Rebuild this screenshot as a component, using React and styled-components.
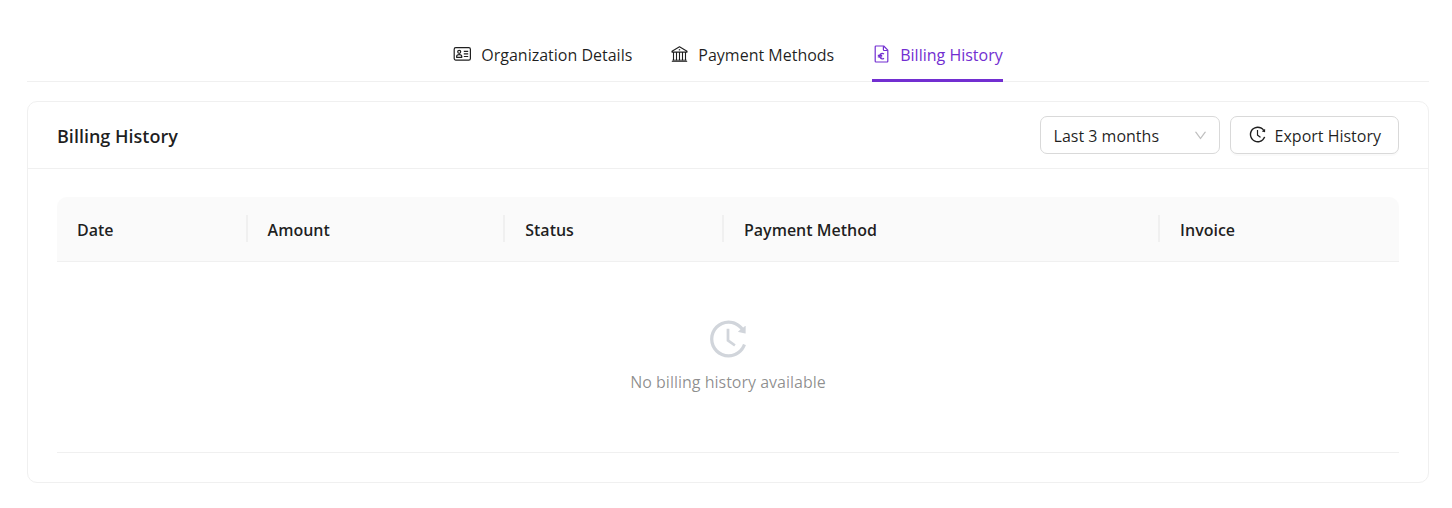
import React, { useState } from "react";
import styled, { createGlobalStyle } from "styled-components";
import { AiOutlineHistory, AiOutlineDown } from "react-icons/ai";

const GlobalStyle = createGlobalStyle`
  *, *::before, *::after { box-sizing: border-box; }
  body {
    margin: 0;
    background: #fff;
    color: rgba(0, 0, 0, 0.88);
    font-family: "Open Sans", "Noto Sans", sans-serif;
    font-size: 16px;
    line-height: 27px;
  }
  button, select { font: inherit; color: inherit; }
`;

const Page = styled.main`
  padding: 27px 23px 25px 27px;
`;

const TabList = styled.div`
  display: flex;
  justify-content: center;
  gap: 38px;
  margin-bottom: 19px;
  box-shadow: inset 0 -1px #f0f0f0;
`;

const Tab = styled.button`
  display: flex;
  align-items: center;
  gap: 10px;
  padding: 15px 0 10px;
  border: 0;
  border-bottom: 3px solid ${(p) => (p.$active ? "#722ed1" : "transparent")};
  background: none;
  color: ${(p) => (p.$active ? "#722ed1" : "inherit")};
  cursor: pointer;

  svg { margin-bottom: 3px; }
`;

const Card = styled.section`
  border: 1px solid #f0f0f0;
  border-radius: 10px;
`;

const CardHeader = styled.header`
  display: flex;
  align-items: center;
  justify-content: space-between;
  padding: 14px 29px;
  border-bottom: 1px solid #f0f0f0;
`;

const Title = styled.h2`
  margin: 0;
  padding-top: 2px;
  font-size: 18px;
  font-weight: 600;
`;

const Actions = styled.div`
  display: flex;
  gap: 10px;
`;

const SelectBox = styled.label`
  display: grid;
  align-items: center;
  width: 180px;

  select, svg { grid-area: 1 / 1; }
  svg {
    justify-self: end;
    margin-right: 12px;
    font-size: 15px;
    color: rgba(0, 0, 0, 0.25);
    pointer-events: none;
  }
`;

const Select = styled.select`
  appearance: none;
  width: 100%;
  height: 38px;
  padding: 2px 36px 0 13px;
  border: 1px solid #d9d9d9;
  border-radius: 7px;
  background: #fff;
`;

const Button = styled.button`
  display: flex;
  align-items: center;
  gap: 8px;
  height: 38px;
  padding: 2px 17px 0;
  border: 1px solid #d9d9d9;
  border-radius: 7px;
  background: #fff;
  box-shadow: 0 2px 0 rgba(0, 0, 0, 0.02);
  cursor: pointer;

  svg { font-size: 19px; margin-bottom: 3px; }
`;

const CardBody = styled.div`
  padding: 28px 29px 29px;
`;

const Table = styled.table`
  width: 100%;
  table-layout: fixed;
  border-collapse: separate;
  border-spacing: 0;
`;

const HeadCell = styled.th`
  width: ${(p) => p.$width};
  padding: 0;
  border-bottom: 1px solid #f0f0f0;
  background: #fafafa;
  font-weight: 600;
  text-align: left;

  &:first-child { border-top-left-radius: 10px; }
  &:last-child { border-top-right-radius: 10px; }
`;

const HeadLabel = styled.div`
  margin: 18px 0 19px;
  padding: 4px 20px 0;
  line-height: 23px;
  border-right: ${(p) => (p.$divided ? "2px solid #f0f0f0" : "0")};
`;

const EmptyCell = styled.td`
  padding: 55px 19px 56px;
  border-bottom: 1px solid #f0f0f0;
`;

const Empty = styled.div`
  display: flex;
  flex-direction: column;
  align-items: center;
  gap: 8px;
  color: rgba(0, 0, 0, 0.45);

  svg { font-size: 44px; color: #d1d5db; }
`;

function LineIcon({ children }) {
  return (
    <svg viewBox="0 0 18 18" width="18" height="18" fill="none" stroke="currentColor" strokeWidth="1.2" strokeLinejoin="round" aria-hidden="true">
      {children}
    </svg>
  );
}

function IdCardIcon() {
  return (
    <LineIcon>
      <rect x="1.2" y="2.7" width="16.2" height="12.4" rx="1.6" />
      <circle cx="6.2" cy="6.8" r="1.5" />
      <path d="M3.6 12.3v-.6c0-1.2 1-2 2.6-2s2.6.8 2.6 2v.6z" />
      <path d="M10.8 6.3h4.4M10.8 8.9h4.4M10.8 11.5h4.4" />
    </LineIcon>
  );
}

function BankIcon() {
  return (
    <LineIcon>
      <path d="M2 7.1v-.8l7.5-4.6L17 6.3v.8z" strokeWidth="1.1" />
      <path d="M8.8 4.8h1.4" />
      <path d="M3.5 7.2v8M6.5 7.2v8M9.5 7.2v8M12.5 7.2v8M15.5 7.2v8" strokeWidth="1.1" />
      <path d="M2.4 15.2h14.2M1.8 16.4h15.4" strokeWidth="0.9" />
    </LineIcon>
  );
}

function FileEuroIcon() {
  return (
    <LineIcon>
      <path d="M4 1h7.7l4.1 4.2v11a.8.8 0 0 1-.8.8H4a.8.8 0 0 1-.8-.8V1.8A.8.8 0 0 1 4 1z" />
      <path d="M11.4 1.2v3.5a.8.8 0 0 0 .8.8h3.4" />
      <path d="M12 9a2.7 2.7 0 1 0 0 4.2M5.8 10.4h4.4M5.8 11.9h4.4" />
    </LineIcon>
  );
}

const TABS = [
  { label: "Organization Details", Icon: IdCardIcon },
  { label: "Payment Methods", Icon: BankIcon },
  { label: "Billing History", Icon: FileEuroIcon },
];

const COLUMNS = [
  { label: "Date", width: "14.2%" },
  { label: "Amount", width: "19.2%" },
  { label: "Status", width: "16.3%" },
  { label: "Payment Method", width: "32.5%" },
  { label: "Invoice", width: "17.8%" },
];

export default function App() {
  const [active, setActive] = useState(2);
  return (
    <>
      <GlobalStyle />
      <Page>
        <TabList role="tablist">
          {TABS.map(({ label, Icon }, i) => (
            <Tab key={label} type="button" role="tab" aria-selected={i === active} $active={i === active} onClick={() => setActive(i)}>
              <Icon />
              {label}
            </Tab>
          ))}
        </TabList>
        <Card>
          <CardHeader>
            <Title>Billing History</Title>
            <Actions>
              <SelectBox>
                <Select aria-label="Period" defaultValue="3">
                  <option value="3">Last 3 months</option>
                  <option value="6">Last 6 months</option>
                  <option value="12">Last 12 months</option>
                </Select>
                <AiOutlineDown />
              </SelectBox>
              <Button type="button">
                <AiOutlineHistory />
                Export History
              </Button>
            </Actions>
          </CardHeader>
          <CardBody>
            <Table>
              <thead>
                <tr>
                  {COLUMNS.map(({ label, width }, i) => (
                    <HeadCell key={label} scope="col" $width={width}>
                      <HeadLabel $divided={i < COLUMNS.length - 1}>{label}</HeadLabel>
                    </HeadCell>
                  ))}
                </tr>
              </thead>
              <tbody>
                <tr>
                  <EmptyCell colSpan={COLUMNS.length}>
                    <Empty>
                      <AiOutlineHistory />
                      No billing history available
                    </Empty>
                  </EmptyCell>
                </tr>
              </tbody>
            </Table>
          </CardBody>
        </Card>
      </Page>
    </>
  );
}
